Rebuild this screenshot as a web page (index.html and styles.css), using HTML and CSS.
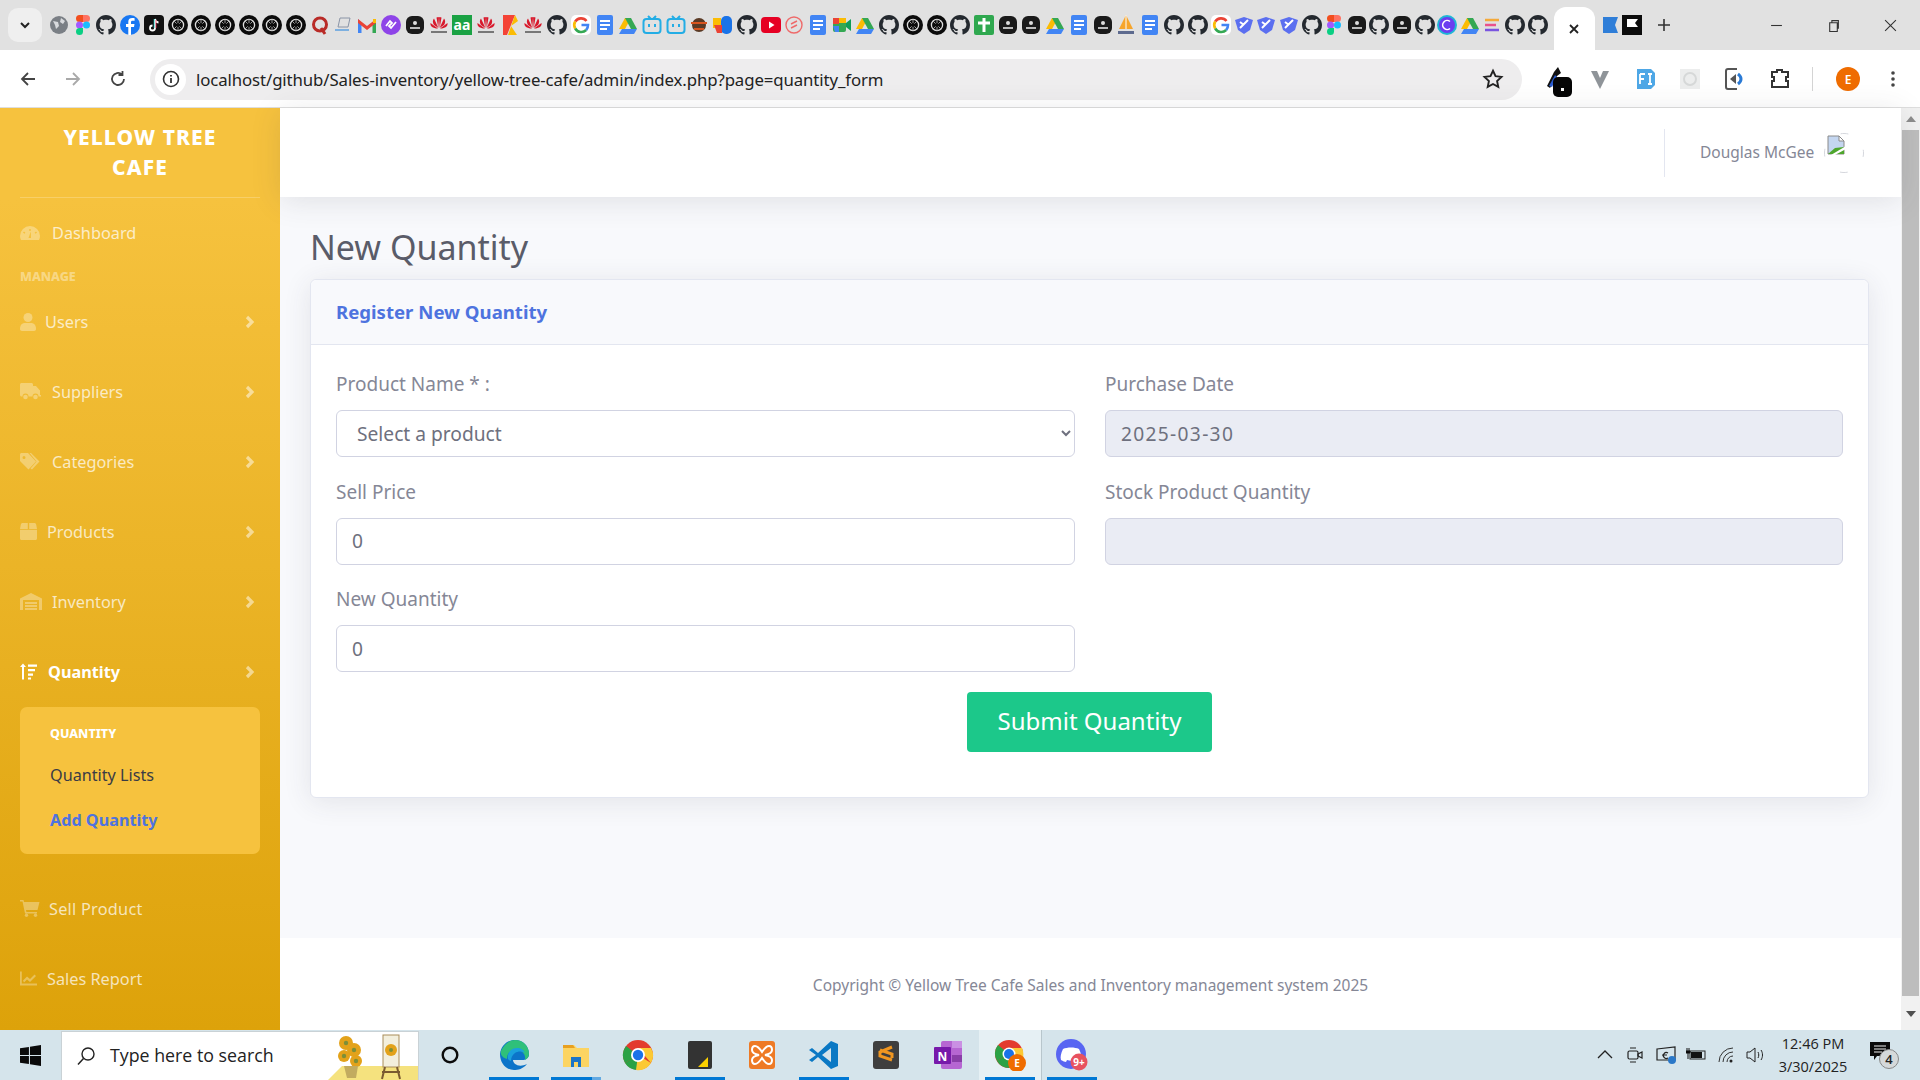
FILE: index.html
```html
<!DOCTYPE html>
<html lang="en">
<head>
<meta charset="utf-8">
<title>New Quantity</title>
<link rel="stylesheet" href="styles.css">
</head>
<body>
<svg class="defs" width="0" height="0" aria-hidden="true">
<defs>
<symbol id="gh" viewBox="0 0 16 16"><path fill="#24292f" d="M8 0C3.58 0 0 3.58 0 8c0 3.54 2.29 6.53 5.47 7.59.4.07.55-.17.55-.38 0-.19-.01-.82-.01-1.49-2.01.37-2.53-.49-2.69-.94-.09-.23-.48-.94-.82-1.13-.28-.15-.68-.52-.01-.53.63-.01 1.08.58 1.23.82.72 1.21 1.87.87 2.33.66.07-.52.28-.87.51-1.07-1.78-.2-3.64-.89-3.64-3.95 0-.87.31-1.59.82-2.15-.08-.2-.36-1.02.08-2.12 0 0 .67-.21 2.2.82.64-.18 1.32-.27 2-.27.68 0 1.36.09 2 .27 1.53-1.04 2.2-.82 2.2-.82.44 1.1.16 1.92.08 2.12.51.56.82 1.27.82 2.15 0 3.07-1.87 3.75-3.65 3.95.29.25.54.73.54 1.48 0 1.07-.01 1.93-.01 2.2 0 .21.15.46.55.38A8.013 8.013 0 0016 8c0-4.42-3.58-8-8-8z"/></symbol>
<symbol id="gpt" viewBox="0 0 20 20"><circle cx="10" cy="10" r="10" fill="#0b0b0b"/><circle cx="10" cy="10" r="5.6" fill="none" stroke="#ddd" stroke-width="1.3"/><path d="M6 6l8 8M14 6l-8 8M10 4v12" stroke="#aaa" stroke-width=".9"/><circle cx="10" cy="10" r="2" fill="#0b0b0b"/></symbol>
<symbol id="dark" viewBox="0 0 20 20"><rect x="1" y="1" width="18" height="18" rx="6" fill="#1a1a1a"/><circle cx="10" cy="8" r="2" fill="#ddd"/><rect x="5" y="12" width="10" height="2" fill="#bbb"/></symbol>
<symbol id="hw" viewBox="0 0 20 20"><g fill="#d8192c"><path d="M9.4 13L5 3.5C3.5 5 3.5 8 5 10z"/><path d="M10.6 13L15 3.5c1.500 1.500 1.500 4.500 0 6.500z"/><path d="M9.300 13L7.500 2.500c1.500-.8 2-.8 2.500 0z"/><path d="M10.700 13l1.800-10.500c-1.500-.8-2-.8-2.500 0z"/><path d="M9 13.500L1.500 8c-.5 3 2 5.500 7.500 5.500z"/><path d="M11 13.500L18.500 8c.5 3-2 5.500-7.500 5.500z"/></g><rect x="2" y="16" width="16" height="2" fill="#777"/></symbol>
<symbol id="g" viewBox="0 0 20 20"><rect width="20" height="20" rx="5" fill="#fff"/><path d="M15.500 6A7 7 0 0 0 4.200 6.500" fill="none" stroke="#ea4335" stroke-width="2.600"/><path d="M4.200 6.500a7 7 0 0 0 0 7" fill="none" stroke="#fbbc05" stroke-width="2.600"/><path d="M4.200 13.500a7 7 0 0 0 11 1.500" fill="none" stroke="#34a853" stroke-width="2.600"/><path d="M15.200 15c1.500-1.500 1.800-3 1.800-5h-6.500" fill="none" stroke="#4285f4" stroke-width="2.600"/></symbol>
<symbol id="docs" viewBox="0 0 20 20"><rect x="2" width="16" height="20" rx="2" fill="#4285f4"/><path d="M5 6h10M5 10h10M5 14h7" stroke="#fff" stroke-width="2"/></symbol>
<symbol id="drive" viewBox="0 0 20 20"><path d="M7 2h6l-6 11H1z" fill="#fbbc04" transform="translate(0 1)"/><path d="M7 3h6l6 11h-6z" fill="#34a853"/><path d="M4 14h15l-3 5H1z" fill="#4285f4"/></symbol>
<symbol id="bili" viewBox="0 0 20 20"><rect x="1.500" y="4" width="17" height="14" rx="3" fill="none" stroke="#23ade5" stroke-width="2"/><path d="M6 1l3 3M14 1l-3 3M7 9v3M13 9v3" stroke="#23ade5" stroke-width="2"/></symbol>
<symbol id="dev" viewBox="0 0 20 20"><path d="M1 5l9-3 9 3-3 10-6 4-6-4z" fill="#5b6ff0"/><path d="M6 13l8-8M6 7l4 3" stroke="#fff" stroke-width="2"/></symbol>
<symbol id="figma" viewBox="0 0 20 20"><path d="M6 0h4v7H6.500a3.500 3.500 0 0 1 0-7z" fill="#f24e1e"/><path d="M10 0h3.500a3.500 3.500 0 0 1 0 7H10z" fill="#ff7262"/><rect x="3" y="6.500" width="7" height="7" rx="3.500" fill="#a259ff"/><circle cx="13.500" cy="10" r="3.500" fill="#1abcfe"/><path d="M6.500 13H10v3.500a3.500 3.500 0 1 1-3.500-3.500z" fill="#0acf83"/></symbol>
</defs>
</svg>

<header class="tabstrip">
  <span class="tabsearch"><svg class="tiny" viewBox="0 0 12 12"><path d="M2 4l4 4 4-4" fill="none" stroke="#222" stroke-width="2"/></svg></span>
  <div class="favs">
    <svg class="fav" viewBox="0 0 20 20"><circle cx="10" cy="10" r="9" fill="#7a7f85"/><path d="M4 6l5 1 1 4-3 3-1-4zM12 3l4 3-2 3-3-2z" fill="#d8dadd"/></svg>
    <svg class="fav"><use href="#figma"/></svg>
    <svg class="fav"><use href="#gh"/></svg>
    <svg class="fav" viewBox="0 0 20 20"><circle cx="10" cy="10" r="10" fill="#1877f2"/><path d="M11 20v-8h3l.5-3H11V7.300c0-1 .4-1.500 1.600-1.500h2V3.200c-3.500-.7-6.300 0-6.300 3.500V9H6v3h2.300v8z" fill="#fff"/></svg>
    <svg class="fav" viewBox="0 0 20 20"><rect width="20" height="20" rx="4" fill="#111"/><path d="M11 4v9a2.500 2.500 0 1 1-2.500-2.500M11 4c.3 2 1.500 3.300 3.500 3.500" fill="none" stroke="#fff" stroke-width="1.800"/><path d="M10.200 4v9" stroke="#25f4ee" stroke-width=".7"/><path d="M12 5v8" stroke="#fe2c55" stroke-width=".7"/></svg>
    <svg class="fav"><use href="#gpt"/></svg><svg class="fav"><use href="#gpt"/></svg><svg class="fav"><use href="#gpt"/></svg><svg class="fav"><use href="#gpt"/></svg><svg class="fav"><use href="#gpt"/></svg><svg class="fav"><use href="#gpt"/></svg>
    <svg class="fav" viewBox="0 0 20 20"><circle cx="10" cy="9.500" r="6.500" fill="none" stroke="#b92b27" stroke-width="3"/><path d="M11 13l4 6" stroke="#b92b27" stroke-width="3"/></svg>
    <svg class="fav" viewBox="0 0 20 20"><path d="M6 3h10l-2 9H4z" fill="none" stroke="#8a94a6"/><path d="M1 15h14" stroke="#7db0e0" stroke-width="2"/></svg>
    <svg class="fav" viewBox="0 0 20 20"><path d="M1 4v14h3.500V8z" fill="#4285f4"/><path d="M19 4v14h-3.500V8z" fill="#34a853"/><path d="M1 4l9 7 9-7v4l-9 7-9-7z" fill="#ea4335"/><path d="M16 4h3v4h-3z" fill="#fbbc04"/></svg>
    <svg class="fav" viewBox="0 0 20 20"><circle cx="10" cy="10" r="10" fill="#8e44e8"/><path d="M5 11l4-5 2 2-3 3 2 2 5-6" fill="none" stroke="#fff" stroke-width="1.800"/></svg>
    <svg class="fav"><use href="#dark"/></svg>
    <svg class="fav"><use href="#hw"/></svg>
    <svg class="fav" viewBox="0 0 20 20"><rect width="20" height="20" fill="#1aa244"/><text x="10" y="15" class="favtext">aa</text></svg>
    <svg class="fav"><use href="#hw"/></svg>
    <svg class="fav" viewBox="0 0 20 20"><path d="M3 0h12L7 20H3z" fill="#f44336"/><path d="M15 0l3 6-7 5 6 9H8z" fill="#fbbc04"/></svg>
    <svg class="fav"><use href="#hw"/></svg>
    <svg class="fav"><use href="#gh"/></svg>
    <svg class="fav"><use href="#g"/></svg>
    <svg class="fav"><use href="#docs"/></svg>
    <svg class="fav"><use href="#drive"/></svg>
    <svg class="fav"><use href="#bili"/></svg><svg class="fav"><use href="#bili"/></svg>
    <svg class="fav" viewBox="0 0 20 20"><circle cx="10" cy="10" r="7" fill="#5a3a25"/><path d="M2 8h16M5 14h10" stroke="#d8541e" stroke-width="2"/></svg>
    <svg class="fav" viewBox="0 0 20 20"><rect y="3" width="8" height="10" fill="#fbbc04"/><rect x="8" y="1" width="11" height="18" rx="5" fill="#1a73e8"/><path d="M1 10h8v8H4z" fill="#ea4335"/></svg>
    <svg class="fav"><use href="#gh"/></svg>
    <svg class="fav" viewBox="0 0 20 20"><rect y="2" width="20" height="16" rx="4" fill="#e60023"/><path d="M8 6.500v7l5.500-3.500z" fill="#fff"/></svg>
    <svg class="fav" viewBox="0 0 20 20"><circle cx="10" cy="10" r="8" fill="none" stroke="#ee6a6a" stroke-width="1.400"/><path d="M7 9l6-3M7 13l6-3" stroke="#ee6a6a" stroke-width="1.400"/></svg>
    <svg class="fav"><use href="#docs"/></svg>
    <svg class="fav" viewBox="0 0 20 20"><rect x="1" y="3" width="13" height="14" rx="2" fill="#34a853"/><path d="M1 3h6v6H1z" fill="#ea4335"/><path d="M7 3h7v5H7z" fill="#fbbc04"/><path d="M1 11h6v6H3z" fill="#4285f4"/><path d="M14 8l5-4v12l-5-4z" fill="#0f9d58"/></svg>
    <svg class="fav"><use href="#drive"/></svg>
    <svg class="fav"><use href="#gh"/></svg>
    <svg class="fav"><use href="#gpt"/></svg><svg class="fav"><use href="#gpt"/></svg>
    <svg class="fav"><use href="#gh"/></svg>
    <svg class="fav" viewBox="0 0 20 20"><rect width="20" height="20" rx="2" fill="#2fa84f"/><path d="M10 3v14M4 8h12" stroke="#fff" stroke-width="3"/></svg>
    <svg class="fav"><use href="#dark"/></svg><svg class="fav"><use href="#dark"/></svg>
    <svg class="fav"><use href="#drive"/></svg>
    <svg class="fav"><use href="#docs"/></svg>
    <svg class="fav"><use href="#dark"/></svg>
    <svg class="fav" viewBox="0 0 20 20"><path d="M10 0L3 14h14z" fill="#f6a52c"/><path d="M10 0v14" stroke="#fff"/><path d="M2 16h16v3H2z" fill="#5d6a8e"/></svg>
    <svg class="fav"><use href="#docs"/></svg>
    <svg class="fav"><use href="#gh"/></svg><svg class="fav"><use href="#gh"/></svg>
  </div>
  <div class="favs favs2">
    <svg class="fav"><use href="#g"/></svg>
    <svg class="fav"><use href="#dev"/></svg><svg class="fav"><use href="#dev"/></svg><svg class="fav"><use href="#dev"/></svg>
    <svg class="fav"><use href="#gh"/></svg>
    <svg class="fav"><use href="#figma"/></svg>
    <svg class="fav"><use href="#dark"/></svg>
    <svg class="fav"><use href="#gh"/></svg>
    <svg class="fav"><use href="#dark"/></svg>
    <svg class="fav"><use href="#gh"/></svg>
    <svg class="fav" viewBox="0 0 20 20"><circle cx="10" cy="10" r="10" fill="#1fb6d5"/><circle cx="10" cy="10" r="8" fill="#6a3df0"/><path d="M13 6.500a4.500 4.500 0 1 0 0 7" fill="none" stroke="#fff" stroke-width="1.600"/></svg>
    <svg class="fav"><use href="#drive"/></svg>
    <svg class="fav" viewBox="0 0 20 20"><path d="M3 5h14" stroke="#f4a93a" stroke-width="2.500"/><path d="M3 10h11" stroke="#e9518c" stroke-width="2.500"/><path d="M3 15h14" stroke="#7a55e0" stroke-width="2.500"/></svg>
    <svg class="fav"><use href="#gh"/></svg><svg class="fav"><use href="#gh"/></svg>
  </div>
  <div class="tab-active"><svg class="tiny" viewBox="0 0 12 12"><path d="M2 2l8 8M10 2l-8 8" stroke="#222" stroke-width="1.800"/></svg></div>
  <svg class="fav flag" viewBox="0 0 20 20"><path d="M3 2h15l-3 8 3 8H3z" fill="#2f7ed8"/></svg>
  <svg class="fav" viewBox="0 0 20 20"><rect width="20" height="20" fill="#0c0c0c"/><path d="M5 4h11l-3 4 3 4H5z" fill="#fff"/></svg>
  <svg class="newtab" viewBox="0 0 14 14"><path d="M7 1v12M1 7h12" stroke="#333" stroke-width="1.600"/></svg>
  <div class="wincontrols">
    <svg class="winbtn" viewBox="0 0 12 12"><path d="M1 6h10" stroke="#333"/></svg>
    <svg class="winbtn" viewBox="0 0 12 12"><path d="M2.500 3.500h7v8h-7zM4.500 3.500v-2h6v7h-1" fill="none" stroke="#333"/></svg>
    <svg class="winbtn" viewBox="0 0 12 12"><path d="M1 1l10 10M11 1L1 11" stroke="#333"/></svg>
  </div>
</header>

<nav class="toolbar">
  <svg class="navbtn" viewBox="0 0 20 20"><path d="M17 10H4M10 4l-6 6 6 6" fill="none" stroke="#444" stroke-width="1.800"/></svg>
  <svg class="navbtn" viewBox="0 0 20 20"><path d="M3 10h13M10 4l6 6-6 6" fill="none" stroke="#a9a9a9" stroke-width="1.800"/></svg>
  <svg class="navbtn navbtn-last" viewBox="0 0 20 20"><path d="M16 10a6 6 0 1 1-2-4.500M14.500 2v4h-4" fill="none" stroke="#444" stroke-width="1.800"/></svg>
  <div class="omnibox">
    <span class="infobtn"><svg viewBox="0 0 20 20" width="20" height="20"><circle cx="10" cy="10" r="7.500" fill="none" stroke="#333" stroke-width="1.600"/><path d="M10 9v5M10 6v1.600" stroke="#333" stroke-width="1.800"/></svg></span>
    <span class="url">localhost/github/Sales-inventory/yellow-tree-cafe/admin/index.php?page=quantity_form</span>
    <svg class="star" viewBox="0 0 20 20"><path d="M10 2.500l2.300 5 5.400.6-4 3.700 1.100 5.400L10 14.500l-4.800 2.700 1.100-5.400-4-3.700 5.400-.6z" fill="none" stroke="#222" stroke-width="1.700"/></svg>
  </div>
  <div class="exts">
    <svg class="ext ext1" viewBox="0 0 28 32"><path d="M13 1l3 6-4 3-7 12-3-2 7-14z" fill="#111"/><path d="M4 20l6-11 2 2-5 10z" fill="#2a5bd0"/><rect x="8" y="11" width="19" height="20" rx="5" fill="#060606"/><rect x="16" y="22" width="3" height="3" fill="#fff"/></svg>
    <svg class="ext" viewBox="0 0 24 24"><path d="M3 4h18l-9 18z" fill="#8f9499"/><path d="M9 4h6l-3 7z" fill="#fff"/></svg>
    <svg class="ext" viewBox="0 0 24 24"><path d="M4 2h14l4 4v12l-4 4H4z" fill="#4ea7e6"/><path d="M7 7h5M7 7v10M7 12h4M15 7h4M17 7v10M15 17h4" stroke="#fff" stroke-width="1.800" fill="none"/></svg>
    <svg class="ext" viewBox="0 0 24 24"><rect x="2" y="2" width="20" height="20" fill="#eceded"/><circle cx="12" cy="12" r="6" fill="none" stroke="#d6d8d8" stroke-width="2"/></svg>
    <svg class="ext" viewBox="0 0 24 24"><path d="M14 2H5a2 2 0 0 0-2 2v16a2 2 0 0 0 2 2h9" fill="none" stroke="#555" stroke-width="2"/><path d="M7 12l6-5v10z" fill="#555"/><path d="M15 7c4 3 4 7 0 10" fill="none" stroke="#2a7ad5" stroke-width="3"/></svg>
    <svg class="ext" viewBox="0 0 24 24"><path d="M9 5V3h5v2h6v5h-2v4h2v6H4v-6h2v-4H4V5z" fill="none" stroke="#333" stroke-width="2"/></svg>
    <span class="extdiv"></span>
    <span class="profile">E</span>
    <svg class="dots" viewBox="0 0 6 20"><circle cx="3" cy="4" r="1.800" fill="#444"/><circle cx="3" cy="10" r="1.800" fill="#444"/><circle cx="3" cy="16" r="1.800" fill="#444"/></svg>
  </div>
</nav>

<div class="page">
  <aside class="sidebar">
    <div class="brand">YELLOW TREE<br>CAFE</div>
    <hr class="rule">
    <a class="item">
      <svg class="ic ic-dash" viewBox="0 0 20 14"><path d="M10 0a10 10 0 0 0-10 10c0 1.500.3 2.800 1 4h18c.7-1.200 1-2.500 1-4A10 10 0 0 0 10 0zm-.7 3h1.400v2H9.300zM4 5.500l1.400 1.300-1 1L3 6.500zm12 0l1 1-1.400 1.300-1-1zM11 12H8.500l2.300-6.500z"/></svg>
      <span class="lbl g-dash">Dashboard</span>
    </a>
    <div class="heading">MANAGE</div>
    <a class="item">
      <svg class="ic ic-user" viewBox="0 0 16 18"><circle cx="8" cy="4.500" r="4.500"/><path d="M0 16c0-4 2-6 5-6h6c3 0 5 2 5 6 0 1-.8 2-2 2H2c-1.200 0-2-1-2-2z"/></svg>
      <span class="lbl g-user">Users</span>
      <svg class="chev" viewBox="0 0 10 14"><path d="M2 2l5 5-5 5" fill="none" stroke-width="3.200"/></svg>
    </a>
    <a class="item">
      <svg class="ic ic-truck" viewBox="0 0 22 17"><path d="M0 1.500C0 .7.700 0 1.500 0h10c.8 0 1.500.7 1.500 1.500V3h3l4 4.500V12h1v1.500h-2.500a3 3 0 0 0-6 0h-4a3 3 0 0 0-6 0H1.500C.7 13.500 0 12.800 0 12z"/><circle cx="5.500" cy="14" r="2.300"/><circle cx="15.500" cy="14" r="2.300"/></svg>
      <span class="lbl g-sup">Suppliers</span>
      <svg class="chev" viewBox="0 0 10 14"><path d="M2 2l5 5-5 5" fill="none" stroke-width="3.200"/></svg>
    </a>
    <a class="item">
      <svg class="ic ic-tag" viewBox="0 0 22 17"><path d="M0 1.500C0 .7.700 0 1.500 0H8l8 8.500-7.500 8L0 8zM4 3a1.500 1.500 0 1 0 0 3 1.500 1.500 0 0 0 0-3z" fill-rule="evenodd"/><path d="M11 0l8.500 8.500-7.500 8-1.500-1 6-7-7-8.500z"/></svg>
      <span class="lbl g-cat">Categories</span>
      <svg class="chev" viewBox="0 0 10 14"><path d="M2 2l5 5-5 5" fill="none" stroke-width="3.200"/></svg>
    </a>
    <a class="item">
      <svg class="ic ic-box" viewBox="0 0 17 17"><path d="M2.500 0h5.300v6H0L.8 1.500C1 .6 1.700 0 2.500 0zM9.200 0h5.300c.8 0 1.500.6 1.700 1.500l.8 4.500H9.200zM0 6.800h17v8.700c0 .8-.7 1.500-1.500 1.500h-14C.7 17 0 16.300 0 15.500z"/></svg>
      <span class="lbl g-prod">Products</span>
      <svg class="chev" viewBox="0 0 10 14"><path d="M2 2l5 5-5 5" fill="none" stroke-width="3.200"/></svg>
    </a>
    <a class="item">
      <svg class="ic ic-truck" viewBox="0 0 22 17"><path d="M0 5.500L11 0l11 5.500V17h-3V7H3v10H0zM5 9h12v2H5zm0 3h12v2H5zm0 3h12v2H5z"/></svg>
      <span class="lbl g-sup">Inventory</span>
      <svg class="chev" viewBox="0 0 10 14"><path d="M2 2l5 5-5 5" fill="none" stroke-width="3.200"/></svg>
    </a>
    <a class="item item-on">
      <svg class="ic ic-box" viewBox="0 0 17 16"><path d="M3 0L0 3.500h2V16h2V3.500h2zM8 1h9v2.200H8zM8 5.500h7v2.200H8zM8 10h5v2.200H8zM8 14h3v2H8z"/></svg>
      <span class="lbl g-qty">Quantity</span>
      <svg class="chev" viewBox="0 0 10 14"><path d="M2 2l5 5-5 5" fill="none" stroke-width="3.200"/></svg>
    </a>
    <div class="submenu">
      <div class="subhead">QUANTITY</div>
      <a class="subitem">Quantity Lists</a>
      <a class="subitem subitem-on">Add Quantity</a>
    </div>
    <a class="item item-after">
      <svg class="ic ic-cart" viewBox="0 0 20 17"><path d="M0 0h3.500l.5 2h15.500l-2 8H6l.4 2H17v1.500H5L2.500 1.500H0z"/><circle cx="6.500" cy="15.300" r="1.700"/><circle cx="15.500" cy="15.300" r="1.700"/></svg>
      <span class="lbl g-sell">Sell Product</span>
    </a>
    <a class="item">
      <svg class="ic ic-box" viewBox="0 0 17 14"><path d="M0 0h1.800v12H17v2H0zM3 9l4-4 3 2.500L14.500 3l1.500 1.500-6 6-3-2.500-3 3z"/></svg>
      <span class="lbl g-prod">Sales Report</span>
    </a>
  </aside>

  <main class="main">
    <div class="topbar">
      <span class="topdiv"></span>
      <span class="username">Douglas McGee</span>
      <span class="avatar">
        <svg class="avatar-ring" viewBox="0 0 40 40"><circle cx="20" cy="20" r="19.500" fill="none" stroke="#d5d7dd" stroke-dasharray="8 22.600" stroke-dashoffset="4"/></svg>
        <svg class="broken" viewBox="0 0 20 20"><path d="M2 1h11l5 5v13H2z" fill="#c4d6f0" stroke="#8a8a8a"/><path d="M13 1v5h5z" fill="#fff" stroke="#8a8a8a"/><path d="M2 19l7-6 9-1v7z" fill="#4ea62c"/><path d="M5 20L20 11v3L9 20z" fill="#fff"/></svg>
      </span>
    </div>
    <div class="content">
      <h1 class="title">New Quantity</h1>
      <section class="card">
        <div class="cardhead">Register New Quantity</div>
        <form class="cardbody">
          <div class="grid">
            <div class="group">
              <label class="label">Product Name * :</label>
              <select class="control control-select"><option>Select a product</option></select>
            </div>
            <div class="group">
              <label class="label">Purchase Date</label>
              <input class="control control-off control-date" value="2025-03-30" disabled>
            </div>
            <div class="group">
              <label class="label">Sell Price</label>
              <input class="control" value="0">
            </div>
            <div class="group">
              <label class="label">Stock Product Quantity</label>
              <input class="control control-off" disabled>
            </div>
            <div class="group">
              <label class="label">New Quantity</label>
              <input class="control" value="0">
            </div>
          </div>
          <div class="actions"><button type="button" class="submit">Submit Quantity</button></div>
        </form>
      </section>
    </div>
    <footer class="footer">Copyright © Yellow Tree Cafe Sales and Inventory management system 2025</footer>
  </main>

  <div class="scrollbar">
    <svg class="arrow" viewBox="0 0 10 6"><path d="M5 0l5 6H0z" fill="#8c8c8c"/></svg>
    <span class="thumb"></span>
    <svg class="arrow" viewBox="0 0 10 6"><path d="M5 6l5-6H0z" fill="#505050"/></svg>
  </div>
</div>

<footer class="taskbar">
  <span class="startbtn"><svg viewBox="0 0 20 20" width="21" height="21"><path d="M0 3l8.500-1.200V9.500H0zM9.500 1.700L20 0v9.500H9.500zM0 10.500h8.500v7.700L0 17zM9.500 10.500H20V20L9.500 18.400z" fill="#0a0a0a"/></svg></span>
  <div class="searchbox">
    <svg class="mag" viewBox="0 0 20 20"><circle cx="12" cy="8" r="6" fill="none" stroke="#222" stroke-width="1.400"/><path d="M7.500 12.500L2 18.500" stroke="#222" stroke-width="1.500"/></svg>
    <span class="searchtext">Type here to search</span>
    <svg class="sunflower" viewBox="0 0 90 50"><path d="M0 50L14 36h76v14z" fill="#f5e27e"/><g fill="#e3a21a"><circle cx="18" cy="13" r="7"/><circle cx="26" cy="20" r="7"/><circle cx="16" cy="26" r="6"/><circle cx="28" cy="31" r="6"/></g><g fill="#7d8f38"><circle cx="18" cy="13" r="2.200"/><circle cx="26" cy="20" r="2.200"/><circle cx="16" cy="26" r="2.200"/><circle cx="28" cy="31" r="2.200"/></g><path d="M16 36h14l-2 12H19z" fill="#c2ab5f"/><rect x="55" y="5" width="16" height="32" fill="#f3efdd" stroke="#a98d5a"/><circle cx="63" cy="20" r="6" fill="#e3a21a"/><circle cx="63" cy="20" r="2" fill="#7d8f38"/><path d="M57 37l-3 12M69 37l3 12M54 42h18" stroke="#7a5a30" stroke-width="2"/></svg>
  </div>
  <svg class="cortana" viewBox="0 0 20 20"><circle cx="10" cy="10" r="7.300" fill="none" stroke="#0c0c0c" stroke-width="2.400"/></svg>
  <div class="apps">
    <span class="app app-on"><svg class="appic" viewBox="0 0 32 32"><path d="M2 15C3 6 10 1 17 1c8 0 14 6 14 14 0 4-3 6-7 6h-9c0 4 6 8 14 4-4 5-9 6-13 6C8 31 2 24 2 15z" fill="#0c74c9"/><path d="M3 12C6 5 12 1 17 1c8 0 14 6 14 14 0 3-2 5-4 6 1-6-3-10-9-10-7 0-9 5-9 9-4-1-7-4-6-8z" fill="#2fc07a"/><path d="M10 20c-1-6 3-11 9-11 4 0 7 2 8 5-3-2-7-2-10 0-3 2-4 5-4 8-1 0-2-1-3-2z" fill="#1aa0dc"/></svg></span>
    <span class="app app-on app-split"><svg class="appic" viewBox="0 0 32 32"><path d="M3 6h11l3 3h12v19H3z" fill="#fcd462"/><path d="M3 6h10l2 3H3z" fill="#e8a020"/><path d="M11 18h10v10h-3v-5h-4v5h-3z" fill="#1b74c8"/></svg></span>
    <span class="app"><svg class="appic" viewBox="0 0 32 32"><circle cx="16" cy="16" r="15" fill="#e33b2e"/><path d="M16 16L3 24a15 15 0 0 0 13 7z" fill="#2ba245"/><path d="M16 16L3 24A15 15 0 0 1 4 7z" fill="#2ba245"/><path d="M16 16l13 8A15 15 0 0 1 14 31z" fill="#fcc934"/><path d="M16 9h13a15 15 0 0 1 0 15z" fill="#fcc934"/><circle cx="16" cy="16" r="7" fill="#fff"/><circle cx="16" cy="16" r="5.200" fill="#1a73e8"/></svg></span>
    <span class="app app-on"><svg class="appic" viewBox="0 0 32 32"><rect x="4" y="2" width="24" height="28" rx="2" fill="#333"/><path d="M14 28l10-10v10z" fill="#fbd000"/></svg></span>
    <span class="app"><svg class="appic" viewBox="0 0 32 32"><rect x="3" y="2" width="26" height="28" rx="3" fill="#ee7a25"/><path d="M9 7c3 0 5 3 7 6 2-3 4-6 7-6 2 0 3 2 3 4s-2 4-7 5c5 1 7 3 7 5s-1 4-3 4c-3 0-5-3-7-6-2 3-4 6-7 6-2 0-3-2-3-4s2-4 7-5c-5-1-7-3-7-5s1-4 3-4z" fill="none" stroke="#fff" stroke-width="2"/></svg></span>
    <span class="app app-on"><svg class="appic" viewBox="0 0 32 32"><path d="M23 2l7 3v22l-7 3-13-12-6 5-3-2 7-5-7-5 3-2 6 5z" fill="#0a78c4"/><path d="M23 9v14l-9-7z" fill="#d5e3ea"/></svg></span>
    <span class="app"><svg class="appic" viewBox="0 0 32 32"><rect x="3" y="2" width="26" height="28" rx="3" fill="#3e3e3e"/><path d="M22 8L10 13v4l12 4M10 11l12 4v4" fill="none" stroke="#f09620" stroke-width="3"/></svg></span>
    <span class="app"><svg class="appic" viewBox="0 0 32 32"><rect x="9" y="2" width="21" height="28" rx="2" fill="#b666d2"/><rect x="20" y="2" width="10" height="7" fill="#ca90e3"/><rect x="20" y="16" width="10" height="7" fill="#8a3ea8"/><rect x="2" y="8" width="17" height="17" rx="1" fill="#7719aa"/><text x="10.500" y="22" class="onenote">N</text></svg></span>
    <span class="app app-on app-hot"><svg class="appic" viewBox="0 0 32 32"><circle cx="15" cy="15" r="14" fill="#e33b2e"/><path d="M15 15L3 22a14 14 0 0 0 12 7z" fill="#2ba245"/><path d="M15 15L3 22A14 14 0 0 1 4 6z" fill="#2ba245"/><path d="M15 9h13a14 14 0 0 1-4 17z" fill="#fcc934"/><circle cx="15" cy="15" r="6.500" fill="#fff"/><circle cx="15" cy="15" r="5" fill="#1a73e8"/><circle cx="23" cy="24" r="9" fill="#ef6c00"/><text x="23" y="28" class="onee">E</text></svg></span>
    <span class="appdiv"></span>
    <span class="app app-on"><svg class="appic" viewBox="0 0 32 32"><circle cx="15" cy="15" r="15" fill="#5865f2"/><path d="M7 10c4-2 12-2 16 0 2 4 3 8 2 11-2 1-4 2-5 2l-1-2c-3 1-5 1-8 0l-1 2c-1 0-3-1-5-2-1-3 0-7 2-11z" fill="#fff"/><circle cx="23" cy="23" r="8.500" fill="#e8525f"/><text x="23" y="27" class="onee">9+</text></svg></span>
  </div>
  <div class="tray">
    <svg class="trayic caret" viewBox="0 0 16 16"><path d="M1 11l7-7 7 7" fill="none" stroke="#222" stroke-width="1.300"/></svg>
    <svg class="trayic" viewBox="0 0 18 18"><rect x="1" y="5" width="10" height="8" rx="1.500" fill="none" stroke="#222" stroke-width="1.200"/><path d="M11 8l4-2v6l-4-2zM3 2h6M3 16h6" fill="none" stroke="#222" stroke-width="1.200"/></svg>
    <span class="trayic trayic-e"><svg viewBox="0 0 20 18" width="20" height="18"><path d="M1 3l18-2v13H1z" fill="none" stroke="#222" stroke-width="1.200"/><path d="M12 7a3 3 0 1 0 0 5M6 9h5" fill="none" stroke="#222" stroke-width="1.200"/><circle cx="16" cy="14" r="4" fill="#2a78c8"/></svg></span>
    <svg class="trayic" viewBox="0 0 20 18"><rect x="4" y="5" width="15" height="8" fill="none" stroke="#222"/><rect x="5" y="6" width="11" height="6" fill="#111"/><path d="M1 2v4M3 2v4M0 5h4v2H0zM2 7v6" stroke="#111" stroke-width="1"/></svg>
    <svg class="trayic" viewBox="0 0 18 18"><g fill="none" stroke="#333" stroke-width="1"><path d="M2 16A14 14 0 0 1 16 2"/><path d="M6 16A10 10 0 0 1 16 6"/><path d="M10 16a6 6 0 0 1 6-6"/></g><circle cx="14" cy="15" r="1.500" fill="#222"/></svg>
    <svg class="trayic" viewBox="0 0 20 18"><path d="M1 6h3l5-4v14l-5-4H1z" fill="none" stroke="#222"/><path d="M12 6c1 2 1 4 0 6M15 4c2 3 2 7 0 10" fill="none" stroke="#222"/></svg>
    <div class="clock"><span>12:46 PM</span><span>3/30/2025</span></div>
    <span class="notif">
      <svg viewBox="0 0 20 18" width="20" height="18"><path d="M0 0h20v14H7l-3 4v-4H0z" fill="#0a0a0a"/><path d="M4 4h12M4 7h12M4 10h8" stroke="#eee" stroke-width="1"/></svg>
      <span class="badge">4</span>
    </span>
  </div>
</footer>
</body>
</html>
```

FILE: styles.css
```css
* { box-sizing: border-box; }
html, body { height: 100%; }
body { margin: 0; height: 100vh; overflow: hidden; display: flex; flex-direction: column; font-family: "Noto Sans", "Open Sans", sans-serif; color: #858796; background: #fff; }
.defs { position: absolute; }

/* tab strip */
.tabstrip { height: 50px; flex: none; background: #e1e1e1; display: flex; align-items: center; padding-left: 8px; }
.tabsearch { width: 34px; height: 34px; border-radius: 10px; background: #efefef; display: flex; align-items: center; justify-content: center; margin-right: 7px; }
.tiny { width: 12px; height: 12px; }
.favs { display: flex; align-items: center; gap: 3.72px; }
.favs2 { gap: 2.62px; margin-left: 3.6px; }
.fav { width: 20px; height: 20px; flex: none; }
.favtext { font: 700 14px "Noto Sans", sans-serif; fill: #fff; text-anchor: middle; }
.tab-active { width: 41px; height: 43px; align-self: flex-end; margin-left: 6px; background: #fff; border-radius: 12px 12px 0 0; display: flex; align-items: center; justify-content: center; }
.flag { margin-left: 5px; margin-right: 2px; }
.newtab { width: 14px; height: 14px; margin-left: 15px; }
.wincontrols { margin-left: auto; display: flex; align-items: center; gap: 44px; padding-right: 23px; }
.winbtn { width: 13px; height: 13px; }

/* toolbar */
.toolbar { height: 58px; flex: none; background: #fff; border-bottom: 1px solid #dedede; border-radius: 10px 10px 0 0; display: flex; align-items: center; padding: 1px 0 0 18px; }
.navbtn { width: 20px; height: 20px; margin-right: 25px; flex: none; }
.navbtn-last { margin-right: 22px; }
.omnibox { width: 1372px; height: 41px; flex: none; border-radius: 21px; background: #eeedee; display: flex; align-items: center; padding: 0 18px 0 5px; }
.infobtn { width: 31px; height: 31px; border-radius: 50%; background: #fff; display: flex; align-items: center; justify-content: center; margin-right: 10px; }
.url { font-size: 16.8px; color: #222; letter-spacing: -.1px; white-space: nowrap; }
.star { width: 22px; height: 22px; margin-left: auto; }
.exts { display: flex; align-items: center; margin-left: 23px; }
.ext { width: 24px; height: 24px; margin-right: 21px; flex: none; }
.ext1 { width: 28px; height: 32px; margin-top: 6px; margin-right: 15px; }
.extdiv { width: 1px; height: 24px; background: #d4d4d4; margin-left: -1px; margin-right: 23px; }
.profile { width: 24px; height: 24px; border-radius: 50%; background: #ef6c00; color: #fff; font-size: 12px; font-weight: 600; display: flex; align-items: center; justify-content: center; margin-right: 30px; }
.dots { width: 6px; height: 20px; }

/* layout */
.page { flex: 1; min-height: 0; display: flex; }

/* sidebar */
.sidebar { width: 280px; flex: none; background: linear-gradient(180deg, #f6c23e 10%, #dda20a 100%); overflow: hidden; display: flex; flex-direction: column; }
.brand { height: 89px; padding-top: 14px; text-align: center; color: #fff; font-weight: 800; font-size: 21px; letter-spacing: 1.1px; line-height: 30px; }
.rule { height: 1px; margin: 0 20px; border: 0; background: rgba(255,255,255,.22); flex: none; }
.item { height: 70px; flex: none; display: flex; align-items: center; padding: 0 25px 1px 20px; color: rgba(255,255,255,.72); font-size: 16.3px; }
.ic { fill: rgba(255,255,255,.32); flex: none; }
.ic-dash { width: 20px; height: 14px; }
.ic-user { width: 16px; height: 18px; }
.ic-truck { width: 22px; height: 17px; }
.ic-tag { width: 22px; height: 17px; }
.ic-box { width: 17px; height: 17px; }
.ic-cart { width: 20px; height: 17px; }
.lbl { margin-left: 10px; }
.g-dash { margin-left: 12px; }
.g-user { margin-left: 9px; }
.g-cat, .g-sup { margin-left: 10px; }
.g-prod { margin-left: 10px; }
.g-qty { margin-left: 11px; }
.g-sell { margin-left: 9px; letter-spacing: .25px; }
.chev { width: 10px; height: 14px; margin-left: auto; stroke: rgba(255,255,255,.5); }
.item-on { color: #fff; font-weight: 700; }
.item-on .ic { fill: #fff; }
.heading { height: 19px; flex: none; padding-left: 20px; font-size: 12.5px; line-height: 17px; font-weight: 800; color: rgba(255,255,255,.4); }
.submenu { height: 147px; flex: none; margin: 0 20px 20px; background: #f6c23e; border-radius: 7px; padding: 14px 0 0 30px; }
.subhead { height: 24px; margin-bottom: 9px; line-height: 26px; font-size: 12.5px; font-weight: 800; color: #fff; }
.subitem { display: block; height: 44px; line-height: 43px; font-size: 16.2px; color: #3a3b45; }
.subitem-on { color: #4e73df; font-weight: 700; line-height: 44px; }

/* main */
.main { flex: 1; min-width: 0; display: flex; flex-direction: column; }
.topbar { height: 89px; flex: none; background: #fff; box-shadow: 0 4px 28px rgba(58,59,69,.13); display: flex; align-items: center; padding-left: 1384px; position: relative; }
.topdiv { width: 1px; height: 48px; background: #e3e6f0; margin-right: 35px; }
.username { font-size: 15.5px; width: 124px; white-space: nowrap; padding-bottom: 1px; }
.avatar { width: 40px; height: 40px; display: block; position: relative; }
.avatar-ring { position: absolute; left: 0; top: 0; width: 40px; height: 40px; }
.broken { position: relative; display: block; width: 20px; height: 20px; margin: 2px 0 0 2px; }
.content { flex: 1; background: #f8f9fc; padding: 0 32px 0 30px; }
.title { margin: 0; height: 82px; padding-top: 25px; font-size: 34px; line-height: 50px; font-weight: 400; color: #5a5c69; }
.card { height: 519px; background: #fff; border: 1px solid #e3e6f0; border-radius: 6px; box-shadow: 0 4px 28px rgba(58,59,69,.11); }
.cardhead { height: 65px; padding: 0 0 2px 25px; display: flex; align-items: center; background: #f8f9fc; border-bottom: 1px solid #e3e6f0; border-radius: 6px 6px 0 0; color: #4e73df; font-weight: 700; font-size: 18.6px; }
.cardbody { padding: 27px 25px 0; }
.grid { display: grid; grid-template-columns: 739px 738px; column-gap: 30px; }
.group { display: flex; flex-direction: column; height: 107.5px; }
.label { height: 24px; line-height: 25px; margin-bottom: 14px; font-size: 19px; color: #858796; }
.control { height: 47px; width: 100%; border: 1px solid #d1d3e2; border-radius: 6px; background: #fff; padding: 0 15px 1px; font: inherit; font-size: 19.2px; color: #6e707e; outline: none; }
.control-select { padding-left: 16px; }
.control-off { background: #eaecf4; }
.control-date { letter-spacing: 1.3px; }
.actions { display: flex; justify-content: center; margin-top: -3px; }
.submit { width: 245px; height: 60px; border: 0; border-radius: 4px; background: #1cc88a; color: #fff; font: inherit; font-size: 24px; padding-bottom: 3px; }
.footer { height: 92px; flex: none; background: #fff; text-align: center; line-height: 92px; font-size: 15.5px; color: #858796; padding-top: 1px; }

/* scrollbar */
.scrollbar { width: 19px; flex: none; background: #f1f1f1; display: flex; flex-direction: column; align-items: center; padding-bottom: 5px; }
.arrow { width: 10px; height: 6px; margin: 8px 0 8px; flex: none; }
.thumb { width: 17px; flex: 1; background: #bdbdbd; margin-bottom: 7px; }

/* taskbar */
.taskbar { height: 50px; flex: none; background: #d5e4eb; display: flex; align-items: stretch; }
.startbtn { width: 61px; display: flex; align-items: center; justify-content: center; }
.searchbox { width: 358px; margin-top: 1px; background: #fff; border: 1px solid #c9d2d6; border-bottom-width: 0; display: flex; align-items: center; position: relative; }
.mag { width: 20px; height: 20px; margin-left: 14px; }
.searchtext { margin-left: 14px; padding-bottom: 2px; font-family: "Open Sans", sans-serif; font-size: 17.8px; color: #222; }
.sunflower { width: 90px; height: 50px; position: absolute; right: 0; bottom: 0; }
.cortana { width: 20px; height: 20px; align-self: center; margin-left: 21px; flex: none; }
.apps { display: flex; margin-left: 22.5px; }
.app { width: 62px; display: flex; align-items: center; justify-content: center; position: relative; }
.appic { width: 32px; height: 32px; }
.app-on::after { content: ""; position: absolute; left: 6px; right: 6px; bottom: 0; height: 3px; background: #0078d4; }
.app-split::before { content: ""; position: absolute; right: 6px; width: 9px; bottom: 0; height: 3px; background: #62a9e2; z-index: 1; }
.app-hot { background: #e6f0f4; }
.appdiv { width: 1px; background: #b8c6cc; margin: 0 -1px 0 0; }
.onenote { font: 700 12px "Noto Sans", sans-serif; fill: #fff; text-anchor: middle; }
.onee { font: 700 10px "Noto Sans", sans-serif; fill: #fff; text-anchor: middle; }
.tray { margin-left: auto; display: flex; align-items: center; padding-right: 20px; }
.trayic { width: 20px; height: 18px; margin-right: 10px; flex: none; display: block; }
.caret { width: 16px; height: 16px; margin-right: 13px; }
.clock { display: flex; flex-direction: column; align-items: center; width: 70px; margin: 0 22px 0 2px; font-family: "Open Sans", sans-serif; font-size: 14.5px; line-height: 23px; color: #222; }
.notif { position: relative; display: block; width: 30px; height: 30px; margin-top: 4px; }
.badge { position: absolute; left: 9px; top: 7px; width: 20px; height: 20px; border-radius: 50%; background: #d5d9da; border: 1px solid #888; font-family: "Open Sans", sans-serif; font-size: 13px; font-weight: 600; line-height: 18px; text-align: center; color: #222; }
```
